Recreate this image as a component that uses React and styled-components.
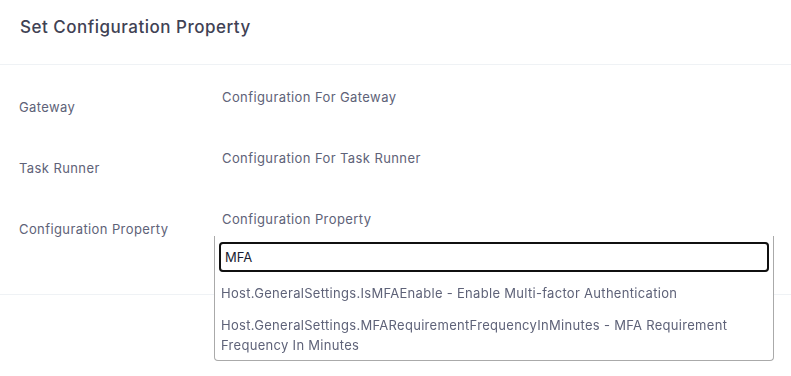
import React from "react";
import styled, { createGlobalStyle } from "styled-components";

const GlobalStyle = createGlobalStyle`
	body {
		margin: 0;
		background: #ffffff;
		font-family: Inter, "Open Sans", sans-serif;
	}
`;

const Modal = styled.div`
	width: 791px;
	min-height: 100vh;
	background: #ffffff;
`;

const Header = styled.div`
	height: 64px;
	display: flex;
	align-items: center;
	padding: 0 20px;
	border-bottom: 1px solid #eff2f5;
`;

const Title = styled.h1`
	margin: 0 0 10px;
	font-size: 17px;
	font-weight: 500;
	letter-spacing: 0.5px;
	color: #3f4254;
`;

const Body = styled.div`
	padding: 22px 18px 24px 19px;
	border-bottom: 1px solid #eff2f5;
`;

const Row = styled.div`
	display: grid;
	grid-template-columns: 195px 560px;
	height: 61px;
	position: relative;
`;

const Label = styled.div`
	padding-top: 10px;
	font-size: 13px;
	line-height: 20px;
	letter-spacing: 0.4px;
	color: #5e6278;
`;

const Value = styled.div`
	padding-left: 8px;
	font-size: 13px;
	line-height: 20px;
	letter-spacing: 0.4px;
	color: #5e6278;
`;

const Dropdown = styled.div`
	position: absolute;
	left: 195px;
	top: 27px;
	width: 560px;
	box-sizing: border-box;
	border: 1px solid #aaaaaa;
	border-top: none;
	border-radius: 0 0 4px 4px;
	background: #ffffff;
	z-index: 2;
`;

const SearchBox = styled.div`
	padding: 6px 4px 4px;
`;

const Search = styled.input`
	display: block;
	width: 100%;
	box-sizing: border-box;
	height: 30px;
	padding: 0 5px;
	border: 1px solid #aaaaaa;
	border-radius: 4px;
	outline: 2px solid #101010;
	outline-offset: -2px;
	box-shadow: inset 0 0 0 3px #ffffff;
	font-family: Inter, sans-serif;
	font-size: 13px;
	color: #181c32;
`;

const Option = styled.div`
	padding: 7px 6px 5px;
	font-size: 13px;
	line-height: 20px;
	letter-spacing: 0.3px;
	color: #5e6278;
`;

const rows = [
	{ label: "Gateway", value: "Configuration For Gateway" },
	{ label: "Task Runner", value: "Configuration For Task Runner" },
	{ label: "Configuration Property", value: "Configuration Property", open: true },
];

const options = [
	"Host.GeneralSettings.IsMFAEnable - Enable Multi-factor Authentication",
	"Host.GeneralSettings.MFARequirementFrequencyInMinutes - MFA Requirement Frequency In Minutes",
];

export default function App() {
	return (
		<>
			<GlobalStyle />
			<Modal>
				<Header>
					<Title>Set Configuration Property</Title>
				</Header>
				<Body>
					{rows.map((row) => (
						<Row key={row.label}>
							<Label>{row.label}</Label>
							<Value>{row.value}</Value>
							{row.open && (
								<Dropdown>
									<SearchBox>
										<Search defaultValue="MFA" autoFocus />
									</SearchBox>
									{options.map((o) => (
										<Option key={o}>{o}</Option>
									))}
								</Dropdown>
							)}
						</Row>
					))}
				</Body>
			</Modal>
		</>
	);
}
